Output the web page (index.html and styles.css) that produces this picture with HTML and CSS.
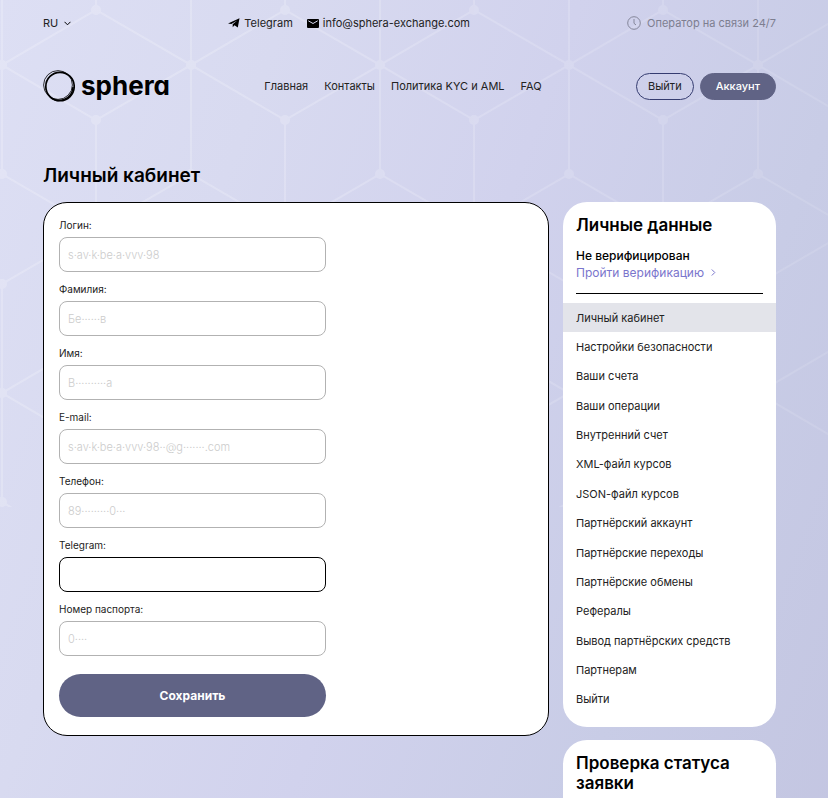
FILE: index.html
```html
<!DOCTYPE html>
<html lang="ru">
<head>
    <meta charset="UTF-8">
    <meta name="viewport" content="width=device-width, initial-scale=1.0">
    <title>Личный кабинет</title>
    <link rel="stylesheet" href="styles.css">
</head>
<body>
    <svg class="bg-grid" aria-hidden="true">
        <defs>
            <pattern id="hex" x="2" y="65" width="189" height="328" patternUnits="userSpaceOnUse">
                <path d="M0 0L94 55L189 0M94 55V273M0 109L189 219M189 109L0 219M0 328L94 273L189 328M0 0V109M0 219V328M189 0V109M189 219V328" fill="none" stroke="#fff" stroke-width="2"/>
                <g fill="#fff">
                    <circle cx="94" cy="55" r="5"/><circle cx="94" cy="273" r="5"/><circle cx="94" cy="164" r="5"/>
                    <circle cx="0" cy="109" r="5"/><circle cx="189" cy="109" r="5"/>
                    <circle cx="0" cy="219" r="5"/><circle cx="189" cy="219" r="5"/>
                    <circle cx="0" cy="0" r="5"/><circle cx="189" cy="0" r="5"/>
                    <circle cx="0" cy="328" r="5"/><circle cx="189" cy="328" r="5"/>
                </g>
            </pattern>
        </defs>
        <rect width="100%" height="100%" fill="url(#hex)"/>
    </svg>

    <div class="container">
        <div class="topbar">
            <button type="button" class="lang">RU
                <svg width="7" height="5" viewBox="0 0 7 5"><path d="M.5 .8l3 3 3-3" fill="none" stroke="#000"/></svg>
            </button>
            <div class="contacts">
                <a href="#">
                    <svg width="12" height="10" viewBox="0 0 12 10"><path d="M0 5.500L11.500 .3L9.800 9.500L6.500 7.300L4.700 9.300V6.300L9.300 2.500L3.300 6Z"/></svg>
                    Telegram
                </a>
                <a href="#">
                    <svg width="12" height="9" viewBox="0 0 12 9"><rect width="12" height="9" rx="1"/><path d="M1.300 1.800l4.700 2.700 4.700-2.700" fill="none" stroke="#d8daf0"/></svg>
                    info@sphera-exchange.com
                </a>
            </div>
            <div class="operator">
                <svg width="14" height="14" viewBox="0 0 14 14" fill="none" stroke="#85869a"><circle cx="7" cy="7" r="6.300"/><path d="M7 3v4.300l2 1.700"/></svg>
                Оператор на связи 24/7
            </div>
        </div>

        <header class="header">
            <a href="#" class="logo">
                <svg width="32" height="32" viewBox="0 0 32 32" fill="none" stroke="#000"><circle cx="17" cy="16.500" r="14.200" stroke-width="1.700"/><circle cx="15" cy="15" r="14.400" stroke-width=".8"/><path d="M7 27a14 14 0 0 0 23-10" stroke-width="1.500"/></svg>
                <span>sphera</span>
            </a>
            <nav class="menu">
                <a href="#">Главная</a>
                <a href="#">Контакты</a>
                <a href="#">Политика KYC и AML</a>
                <a href="#">FAQ</a>
            </nav>
            <div class="buttons">
                <a href="#" class="btn btn-exit">Выйти</a>
                <a href="#" class="btn btn-account">Аккаунт</a>
            </div>
        </header>

        <h1>Личный кабинет</h1>

        <div class="content">
            <main class="card">
                <form class="form">
                    <label for="login">Логин:</label>
                    <input type="text" id="login" value="s·av·k·be·a·vvv·98" disabled>
                    <label for="lastname">Фамилия:</label>
                    <input type="text" id="lastname" value="Бе······в" disabled>
                    <label for="firstname">Имя:</label>
                    <input type="text" id="firstname" value="В··········а" disabled>
                    <label for="email">E-mail:</label>
                    <input type="text" id="email" value="s·av·k·be·a·vvv·98··@g·······.com" disabled>
                    <label for="phone">Телефон:</label>
                    <input type="text" id="phone" value="89·········0···" disabled>
                    <label for="telegram">Telegram:</label>
                    <input type="text" id="telegram" value="">
                    <label for="passport">Номер паспорта:</label>
                    <input type="text" id="passport" value="0····" disabled>
                    <button type="submit">Сохранить</button>
                </form>
            </main>

            <aside class="sidebar">
                <section class="widget">
                    <h2>Личные данные</h2>
                    <div class="status">
                        <p>Не верифицирован</p>
                        <a href="#">Пройти верификацию
                            <svg width="5" height="7" viewBox="0 0 5 7"><path d="M.8 .5l3 3-3 3" fill="none" stroke="#7a75cc"/></svg>
                        </a>
                    </div>
                    <ul class="account-menu">
                        <li class="active"><a href="#">Личный кабинет</a></li>
                        <li><a href="#">Настройки безопасности</a></li>
                        <li><a href="#">Ваши счета</a></li>
                        <li><a href="#">Ваши операции</a></li>
                        <li><a href="#">Внутренний счет</a></li>
                        <li><a href="#">XML-файл курсов</a></li>
                        <li><a href="#">JSON-файл курсов</a></li>
                        <li><a href="#">Партнёрский аккаунт</a></li>
                        <li><a href="#">Партнёрские переходы</a></li>
                        <li><a href="#">Партнёрские обмены</a></li>
                        <li><a href="#">Рефералы</a></li>
                        <li><a href="#">Вывод партнёрских средств</a></li>
                        <li><a href="#">Партнерам</a></li>
                        <li><a href="#">Выйти</a></li>
                    </ul>
                </section>
                <section class="widget widget-check">
                    <h2>Проверка статуса заявки</h2>
                </section>
            </aside>
        </div>
    </div>
</body>
</html>
```

FILE: styles.css
```css
* {
    box-sizing: border-box;
}

body {
    margin: 0;
    min-height: 100vh;
    background: linear-gradient(110deg, #dddff4 0%, #d8daf0 25%, #d1d2ed 50%, #c8cce6 75%, #c3c5e1 100%);
    font-family: Inter, "Noto Sans", sans-serif;
    font-size: 11px;
    line-height: 20px;
    color: #222;
}
a {
    color: inherit;
    text-decoration: none;
}
h1, h2, p, ul {
    margin: 0;
    padding: 0;
}

/* decorative grid behind the page */
.bg-grid {
    position: absolute;
    top: 0;
    left: 0;
    z-index: -1;
    width: 100%;
    height: 507px;
    opacity: 0.2;
    -webkit-mask-image: linear-gradient(to right, #000 30%, rgba(0, 0, 0, 0.5));
    mask-image: linear-gradient(to right, #000 30%, rgba(0, 0, 0, 0.5));
}

.container {
    padding: 13px 52px 13px 43px;
}

/* top */
.topbar {
    display: flex;
    justify-content: space-between;
    align-items: center;
}
.lang {
    display: flex;
    align-items: center;
    gap: 6px;
    padding: 0;
    border: none;
    background: none;
    font: inherit;
    color: #222;
    cursor: pointer;
}
.contacts {
    display: flex;
    gap: 14px;
}
.contacts a {
    display: flex;
    align-items: center;
    gap: 4px;
}
.operator {
    display: flex;
    align-items: center;
    gap: 6px;
    color: #7d7e90;
}

/* header */
.header {
    display: flex;
    justify-content: space-between;
    align-items: center;
    margin-top: 37px;
}
.logo {
    display: flex;
    align-items: center;
    gap: 6px;
    font-size: 26px;
    font-weight: 700;
    line-height: 32px;
    color: #000;
    font-feature-settings: "cv11";
}
.menu {
    display: flex;
    gap: 16px;
}
.buttons {
    display: flex;
    gap: 6px;
}
.btn {
    height: 27px;
    padding: 0 11px;
    border: 1px solid #353c70;
    border-radius: 14px;
    line-height: 24px;
}
.btn-account {
    padding: 0 15px;
    background-color: #606385;
    border-color: #606385;
    color: #fff;
    font-weight: 500;
}

h1 {
    margin: 62px 0 14px;
    font-size: 19px;
    font-weight: 600;
    line-height: 24px;
    color: #000;
}

.content {
    display: grid;
    grid-template-columns: 1fr 213px;
    gap: 14px;
    align-items: start;
}
.card {
    padding: 14px 15px 18px;
    background-color: #fff;
    border: 1px solid #000;
    border-radius: 24px;
}

/* form */
.form {
    max-width: 267px;
}
.form label {
    display: block;
    margin-bottom: 4px;
    font-size: 10px;
    line-height: 16px;
}
.form input {
    display: block;
    width: 100%;
    height: 35px;
    margin-bottom: 9px;
    padding: 0 8px;
    border: 1px solid #000;
    border-radius: 8px;
    background-color: #fff;
    font: inherit;
}
.form input:disabled {
    border-color: #b2b2b2;
    color: #ccc;
    font-weight: 300;
}
.form button {
    display: block;
    width: 100%;
    height: 43px;
    margin-top: 18px;
    border: none;
    border-radius: 22px;
    background-color: #606385;
    color: #fff;
    font: inherit;
    font-size: 12px;
    font-weight: 700;
    cursor: pointer;
}

/* sidebar */
.sidebar {
    display: grid;
    gap: 13px;
}
.widget {
    padding: 13px 0;
    background-color: #fff;
    border-radius: 24px;
}
.widget-check {
    min-height: 160px;
}
.widget h2 {
    padding: 0 13px;
    font-size: 17px;
    font-weight: 600;
    line-height: 20px;
    color: #000;
}
.status {
    margin: 12px 13px 9px;
    padding-bottom: 12px;
    border-bottom: 1px solid #000;
    font-size: 12px;
    line-height: 17px;
}
.status p {
    font-weight: 500;
    color: #000;
}
.status a {
    display: flex;
    align-items: center;
    gap: 7px;
    color: #7a75cc;
}
.account-menu {
    display: grid;
    grid-auto-rows: 1fr;
    height: 411px;
    list-style: none;
}
.account-menu a {
    display: flex;
    align-items: center;
    height: 100%;
    padding: 0 13px;
}
.account-menu .active {
    background-color: #e3e4ea;
}
```
